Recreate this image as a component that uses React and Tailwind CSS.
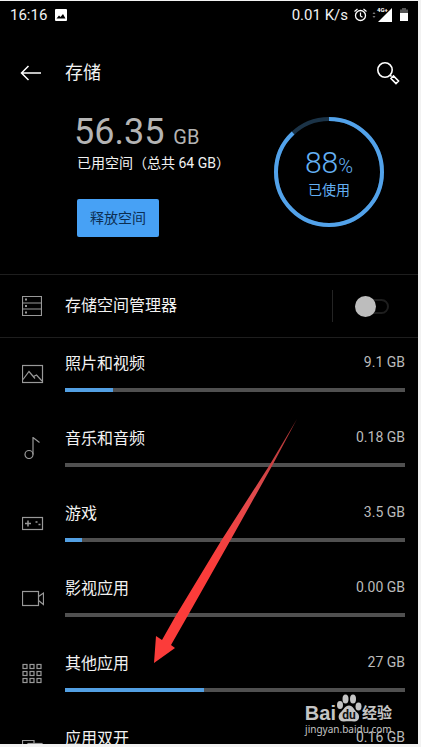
import React, { useState } from 'react';

const ICON_PATHS = {
  photo: (
    <>
      <rect x="0.5" y="3.5" width="20" height="17" />
      <path d="M1 17.5L7 9.5L13 16.5M11.5 14.5L14.5 13L20 19" />
    </>
  ),
  music: (
    <>
      <circle cx="7" cy="17.5" r="4" />
      <path d="M11 17.5V0.5L17.5 5.5" />
    </>
  ),
  game: (
    <>
      <rect x="0.5" y="5.5" width="20" height="12" />
      <path d="M3 11.5H9M6 8.5V14.5M13.5 10H15.5M16.5 12.5H18.5" strokeWidth="1.5" />
    </>
  ),
  video: (
    <>
      <rect x="0.5" y="4.5" width="16" height="14" />
      <path d="M16.5 9.5L21.5 6V17.5L16.5 13.5" />
    </>
  ),
  apps: (
    <>
      {[1.5, 8.5, 15.5].map((y) =>
        [1.5, 8.5, 15.5].map((x) => (
          <rect key={`${x}-${y}`} x={x - 0.5} y={y + 1} width="4" height="4" />
        ))
      )}
    </>
  ),
  dual: (
    <>
      <path d="M0.5 18V3.5H12V7" />
      <rect x="6" y="6.5" width="14" height="14" />
    </>
  )
};

const categories = [
  { id: 'photo', name: '照片和视频', size: '9.1 GB', percent: 14 },
  { id: 'music', name: '音乐和音频', size: '0.18 GB', percent: 0 },
  { id: 'game', name: '游戏', size: '3.5 GB', percent: 5 },
  { id: 'video', name: '影视应用', size: '0.00 GB', percent: 0 },
  { id: 'apps', name: '其他应用', size: '27 GB', percent: 41 },
  { id: 'dual', name: '应用双开', size: '0.16 GB', percent: 0 }
];

const StatusBar = () => (
  <div className="flex h-8 shrink-0 items-center justify-between px-[10px] pb-1 text-[15px] leading-5">
    <div className="flex items-center gap-2">
      <span>16:16</span>
      <svg width="12" height="12" viewBox="0 0 12 12">
        <rect width="12" height="12" rx="1" fill="#fff" />
        <path d="M1.5 9.5L4 6.5L5.5 8L8 5L10.5 9.5Z" fill="#000" />
      </svg>
    </div>
    <div className="flex items-center">
      <span>0.01 K/s</span>
      <svg className="ml-[6px]" width="13" height="14" viewBox="0 0 13 14" fill="none" stroke="#fff">
        <circle cx="6.5" cy="7.5" r="5" strokeWidth="1.3" />
        <path d="M6.5 4.5V8L8.5 9.3M0.5 3.5L3.5 1M12.5 3.5L9.5 1" strokeWidth="1.2" />
      </svg>
      <svg className="ml-[5px]" width="20" height="16" viewBox="0 0 20 16">
        <path d="M0.5 7L2 5L3.5 7ZM0.5 9L2 11L3.5 9Z" fill="#777" />
        <path d="M6 15H20V1Z" fill="#fff" />
        <text x="5" y="5" fontSize="6" fontWeight="700" fill="#fff">
          4G+
        </text>
      </svg>
      <svg className="ml-2" width="8" height="14" viewBox="0 0 8 14">
        <path d="M2 0H6V1.5H8V5H0V1.5H2Z" fill="#555" />
        <rect y="5" width="8" height="8" fill="#fff" />
      </svg>
    </div>
  </div>
);

const UsageRing = ({ percent }) => {
  const length = 2 * Math.PI * 53;

  return (
    <div className="relative size-[110px] text-[#64b0f3]">
      <svg className="size-full -rotate-90" viewBox="0 0 110 110" fill="none" strokeWidth="4">
        <circle cx="55" cy="55" r="53" stroke="#1b3347" />
        <circle
          cx="55"
          cy="55"
          r="53"
          stroke="#52a2ea"
          strokeDasharray={`${(length * percent) / 100} ${length}`}
        />
      </svg>
      <div className="absolute inset-0 flex flex-col items-center justify-center pt-1">
        <p className="text-[30px] leading-7 font-light">
          {percent}
          <span className="text-xl">%</span>
        </p>
        <p className="text-sm leading-5">已使用</p>
      </div>
    </div>
  );
};

const CategoryRow = ({ category }) => (
  <li className="flex h-[75px] shrink-0 items-start pr-[13px] pl-[22px]">
    <div className="flex h-[68px] w-[43px] items-center">
      <svg width="22" height="22" viewBox="0 0 22 22" fill="none" stroke="#999" strokeWidth="1.2">
        {ICON_PATHS[category.id]}
      </svg>
    </div>
    <div className="flex-1 pt-[13px]">
      <div className="flex items-start justify-between">
        <span className="text-base leading-6">{category.name}</span>
        <span className="text-sm leading-5 text-[#bbb]">{category.size}</span>
      </div>
      <div
        role="progressbar"
        aria-label={category.name}
        aria-valuenow={category.percent}
        className="mt-3 h-1 bg-[#505050]"
      >
        <div className="h-full bg-[#529fe3]" style={{ width: `${category.percent}%` }} />
      </div>
    </div>
  </li>
);

const Watermark = () => (
  <div className="absolute right-[26px] bottom-[9px] text-[#c4c4c4]">
    <div className="flex items-end justify-center">
      <span className="font-['Liberation_Sans',sans-serif] text-xl leading-5 font-bold">Bai</span>
      <svg width="26" height="29" viewBox="0 0 26 29" fill="currentColor">
        <ellipse cx="4" cy="11" rx="3" ry="4" />
        <ellipse cx="9.5" cy="5" rx="3" ry="4.5" />
        <ellipse cx="17" cy="5" rx="3" ry="4.5" />
        <ellipse cx="22.5" cy="12.5" rx="3" ry="4" />
        <path d="M13 11.5C17 11.5 18 16 21 18.5C25 22 23 28 18 27.5C14.5 27 11.5 27 8 27.5C2.5 28 1 22 4.5 18.5C7.5 16 9 11.5 13 11.5Z" />
        <text x="13" y="24.5" textAnchor="middle" fontSize="12" fontWeight="700" fill="#111">
          du
        </text>
      </svg>
      <span className="text-[15px] leading-5 font-bold">经验</span>
    </div>
    <p className="text-center font-['Noto_Sans',sans-serif] text-[10px] leading-3">jingyan.baidu.com</p>
  </div>
);

const App = () => {
  const [managerOn, setManagerOn] = useState(false);

  return (
    <div className="h-screen bg-[#f2f2f2] pt-px pr-[3px] pb-[3px] font-['Roboto','Noto_Sans_CJK_SC',sans-serif]">
      <main className="relative flex h-full flex-col overflow-hidden bg-black text-[#f2f2f2]">
        <StatusBar />

        <header className="flex h-20 shrink-0 items-center pr-[18px] pl-5">
          <button type="button" aria-label="返回" className="w-[45px]">
            <svg width="22" height="16" viewBox="0 0 22 16" fill="none" stroke="#fff" strokeWidth="1.5">
              <path d="M21 8H1.5M8.5 1L1.5 8L8.5 15" />
            </svg>
          </button>
          <h1 className="flex-1 text-lg leading-6">存储</h1>
          <button type="button" aria-label="搜索">
            <svg width="24" height="24" viewBox="0 0 24 24" fill="none" stroke="#fff" strokeWidth="1.6">
              <circle cx="9" cy="9" r="7.2" />
              <path d="M14 14L15.5 15.5M15 17.5L17.5 15L22.5 20L20 22.5Z" />
            </svg>
          </button>
        </header>

        <section className="flex shrink-0 items-start justify-between pr-[34px] pb-[37px] pl-[74px]">
          <div>
            <p className="text-4xl leading-[38px] text-[#b4b4b4]">
              56.35 <span className="text-xl">GB</span>
            </p>
            <div className="pl-[3px]">
              <p className="text-sm leading-6">已用空间（总共 64 GB）</p>
              <button
                type="button"
                className="mt-6 h-[38px] rounded-xs bg-[#47a1f5] px-[13px] text-sm text-[#0c2e52]"
              >
                释放空间
              </button>
            </div>
          </div>
          <div className="pt-1">
            <UsageRing percent={88} />
          </div>
        </section>

        <section className="flex h-16 shrink-0 items-center border-y border-[#1e1e1e] pr-[29px] pl-[22px]">
          <svg width="20" height="20" viewBox="0 0 20 20" fill="none" stroke="#999" strokeWidth="1.2">
            <path d="M0.5 0.5H19.5V19.5H0.5ZM0.5 7H19.5M0.5 13H19.5" />
            <path d="M3 3.5H5M3 10H5M3 16.5H5" strokeWidth="2" />
          </svg>
          <label htmlFor="manager" className="ml-[23px] flex-1 text-base leading-6">
            存储空间管理器
          </label>
          <div className="flex h-8 items-center border-l border-[#242424] pl-[22px]">
            <input
              id="manager"
              type="checkbox"
              checked={managerOn}
              onChange={(e) => setManagerOn(e.target.checked)}
              className="relative h-[15px] w-[34px] appearance-none rounded-full border-2 border-[#1e1e1e] before:absolute before:-top-[5px] before:-left-[2px] before:size-[21px] before:rounded-full before:bg-[#bdbdbd] checked:before:left-[11px]"
            />
          </div>
        </section>

        <ul className="flex flex-col pt-px">
          {categories.map((category) => (
            <CategoryRow key={category.id} category={category} />
          ))}
        </ul>

        <svg
          className="pointer-events-none absolute top-[418px] left-[154px]"
          width="144"
          height="245"
          viewBox="0 0 144 245"
        >
          <defs>
            <linearGradient id="arrow" gradientUnits="userSpaceOnUse" x1="143" y1="0" x2="0" y2="244">
              <stop offset="0" stopColor="#a33" />
              <stop offset="0.3" stopColor="#e04a4c" />
              <stop offset="0.6" stopColor="#fb3c3a" />
            </linearGradient>
          </defs>
          <path d="M143 0L118 47L76 122L33 198L17 226L21 229L0 244L2 217L8 221L21 198L67 122L115 47Z" fill="url(#arrow)" />
        </svg>

        <Watermark />
      </main>
    </div>
  );
};

export default App;
